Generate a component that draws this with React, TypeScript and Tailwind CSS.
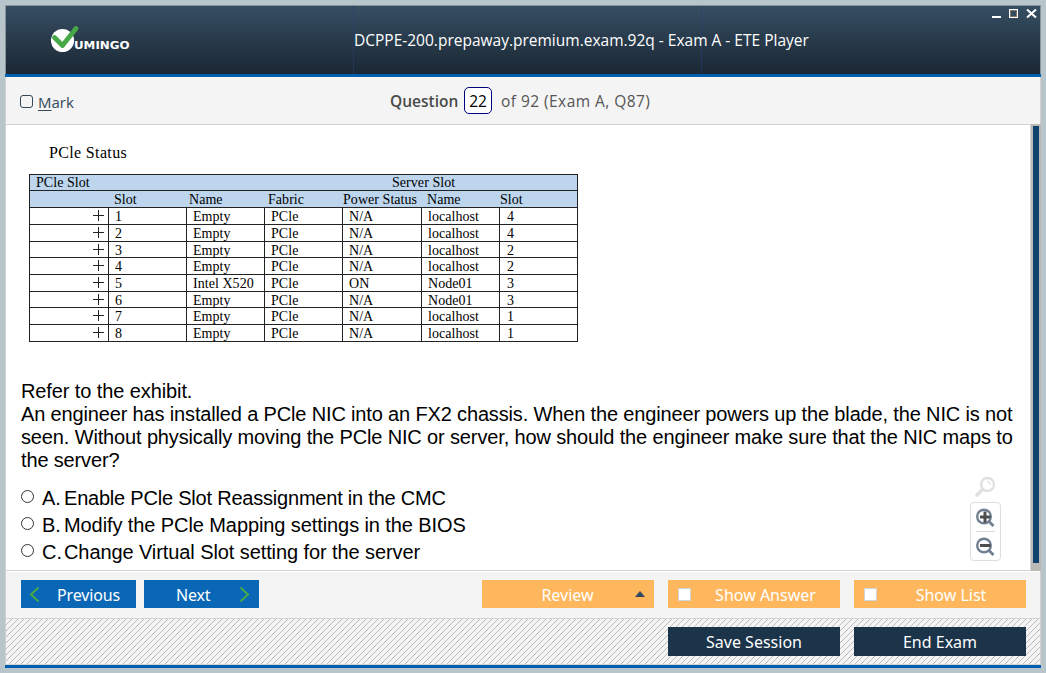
import React from "react";

const SEGOE = "font-['Open_Sans','Noto_Sans',sans-serif]";
const TAHOMA = "font-['Noto_Sans','Open_Sans',sans-serif]";

const slots = [
  { h: "h-[17px]", cells: ["1", "Empty", "PCle", "N/A", "localhost", "4"] },
  { h: "h-[17px]", cells: ["2", "Empty", "PCle", "N/A", "localhost", "4"] },
  { h: "h-[16px]", cells: ["3", "Empty", "PCle", "N/A", "localhost", "2"] },
  { h: "h-[17px]", cells: ["4", "Empty", "PCle", "N/A", "localhost", "2"] },
  { h: "h-[17px]", cells: ["5", "Intel X520", "PCle", "ON", "Node01", "3"] },
  { h: "h-[16px]", cells: ["6", "Empty", "PCle", "N/A", "Node01", "3"] },
  { h: "h-[17px]", cells: ["7", "Empty", "PCle", "N/A", "localhost", "1"] },
  { h: "h-[17px]", cells: ["8", "Empty", "PCle", "N/A", "localhost", "1"] },
];

const COLS = "grid grid-rows-[100%] grid-cols-[79px_78px_78px_78px_79px_78px_78px]";

function Logo() {
  return (
    <svg className="ml-[45px] block" width="84" height="30" viewBox="0 0 84 30">
      <circle cx="11.5" cy="16.5" r="11.6" fill="#fff" />
      <path d="M3.5 13.5 L11.5 21.5 L25 4.5" fill="none" stroke="#46a846" strokeWidth="4.8" strokeLinecap="round" strokeLinejoin="round" />
      <text x="23" y="25" fill="#fff" fontFamily="DejaVu Sans" fontWeight="bold" fontSize="9.6" textLength="55.5" lengthAdjust="spacingAndGlyphs">UMINGO</text>
    </svg>
  );
}

function Header() {
  return (
    <header className="flex h-[68px] bg-linear-to-b from-[#374f63] to-[#1a2734]">
      <div className="flex w-[347px] items-start pt-[18px]">
        <Logo />
      </div>
      <div className="flex w-[349px] items-center border-x border-dotted border-[#2c3a78] pt-[2px]">
        <h1 className={`${SEGOE} whitespace-nowrap text-[15.5px] font-normal text-white`}>
          DCPPE-200.prepaway.premium.exam.92q - Exam A - ETE Player
        </h1>
      </div>
      <div className="flex flex-1 justify-end pt-[2px] pr-px">
        <svg width="48" height="12" viewBox="0 0 48 12" shapeRendering="crispEdges">
          <rect x="1" y="8" width="9" height="2" fill="#fff" />
          <rect x="18.500" y="1.500" width="8" height="8" fill="none" stroke="#fff" />
          <rect x="19.500" y="2.500" width="6" height="6" fill="none" stroke="#80766c" />
          <path d="M36 1.500 L45 9.500 M45 1.500 L36 9.500" stroke="#fff" strokeWidth="2" shapeRendering="auto" />
        </svg>
      </div>
    </header>
  );
}

function QuestionBar() {
  return (
    <div className={`${SEGOE} flex h-[48px] items-center border-b border-[#d2d2d2] bg-[#f4f4f4] text-[15.5px]`}>
      <div className="flex w-[384px] items-center pl-[14px] pt-[3px] text-[15px] text-[#33495c]">
        <span className="mb-[2px] mr-[5px] h-[13px] w-[13px] rounded-[3px] border border-[#33495c]" />
        <span><span className="underline underline-offset-2">M</span>ark</span>
      </div>
      <span className="w-[69px] pt-[2px] font-semibold text-[#4a4a4a]">Question</span>
      <span className="ml-[5px] flex h-[27px] w-[28px] items-center justify-center rounded-[5px] border border-[#000080] bg-white pt-[2px] text-black">22</span>
      <span className="ml-[9px] pt-[2px] whitespace-nowrap tracking-[0.45px] text-[#555]">of 92 (Exam A, Q87)</span>
    </div>
  );
}

function Exhibit() {
  return (
    <div className="ml-[23px] pt-[18px] font-['Liberation_Serif',serif] text-black">
      <div className="h-[31px] pl-[20px] text-[16px] leading-[20px] tracking-[0.35px]">PCle Status</div>
      <div className="w-[549px] border border-b-0 border-[#222] text-[14px] leading-[18px] tracking-[0.05px]">
        <div className="flex h-[16px] border-b border-[#222] bg-[#bdd6ee] leading-[16px]">
          <span className="w-[356px] pl-[6px]">PCle Slot</span>
          <span className="pl-[6px]">Server Slot</span>
        </div>
        <div className={`${COLS} h-[17px] border-b border-[#222] bg-[#bdd6ee] whitespace-nowrap`}>
          <span />
          <span className="pl-[5px]">Slot</span>
          <span className="pl-[2px]">Name</span>
          <span className="pl-[3px]">Fabric</span>
          <span>Power Status</span>
          <span className="pl-[5px]">Name</span>
          <span>Slot</span>
        </div>
        {slots.map((row) => (
          <div key={row.cells[0]} className={`${COLS} ${row.h} border-b border-[#222] whitespace-nowrap`}>
            <span className="flex items-start justify-end border-r border-[#222] pt-[2px] pr-[4px]">
              <svg width="11" height="11" viewBox="0 0 11 11"><path d="M0 5.500H11M5.500 0V11" stroke="#222" /></svg>
            </span>
            {row.cells.map((c, i) => (
              <span key={i} className={i === 5 ? "h-full pl-[7px]" : "h-full border-r border-[#222] pl-[6px]"}>{c}</span>
            ))}
          </div>
        ))}
      </div>
    </div>
  );
}

const answers = [
  { letter: "A.", text: "Enable PCle Slot Reassignment in the CMC", spacing: "tracking-[-0.21px]" },
  { letter: "B.", text: "Modify the PCle Mapping settings in the BIOS", spacing: "tracking-[-0.09px]" },
  { letter: "C.", text: "Change Virtual Slot setting for the server", spacing: "tracking-[-0.09px]" },
];

function Magnifier({ sign }: { sign: "plus" | "minus" }) {
  return (
    <svg className="mr-px shrink-0" width="20" height="20" viewBox="0 0 20 20">
      <circle cx="9" cy="8.500" r="6.800" fill="none" stroke="#708090" strokeWidth="2.400" />
      <path d="M13.500 13 L18.500 18" stroke="#708090" strokeWidth="2.800" />
      <path d={sign === "plus" ? "M5 9H15.500M10 3.500V14.500" : "M5 8.500H15.500"} stroke="#4e4e4e" strokeWidth="3" />
    </svg>
  );
}

function Content() {
  return (
    <main className="flex h-[446px] bg-white">
      <div className="relative flex-1 border-b border-[#d2d2d2]">
        <Exhibit />
        <div className="mt-[38px] ml-[15px] font-['Liberation_Sans',Arial,sans-serif] text-[20px] leading-[23px] whitespace-nowrap text-black">
          <p className="tracking-[-0.1px]">Refer to the exhibit.</p>
          <p className="tracking-[-0.153px]">An engineer has installed a PCle NIC into an FX2 chassis. When the engineer powers up the blade, the NIC is not</p>
          <p className="tracking-[-0.14px]">seen. Without physically moving the PCle NIC or server, how should the engineer make sure that the NIC maps to</p>
          <p className="tracking-[-0.15px]">the server?</p>
          <ul className="mt-[13px] leading-[27px]">
            {answers.map((a) => (
              <li key={a.letter} className="flex">
                <span className="mt-[5px] mr-[8px] h-[13px] w-[13px] rounded-full border border-[#333]" />
                <span className="w-[22px]">{a.letter}</span>
                <span className={a.spacing}>{a.text}</span>
              </li>
            ))}
          </ul>
        </div>
        <div className="absolute right-[29px] bottom-[9px] flex w-[31px] flex-col items-center">
          <svg className="mr-[2px] mb-[4px]" width="22" height="22" viewBox="0 0 22 22">
            <circle cx="13.500" cy="8.500" r="6.500" fill="none" stroke="#e0e0e0" strokeWidth="2.400" />
            <path d="M8.500 13.500 L3 19" stroke="#e0e0e0" strokeWidth="3.600" strokeLinecap="round" />
            <path d="M13 5.500 Q16 5.500 16.500 8.500" fill="none" stroke="#e0e0e0" strokeWidth="1.200" />
          </svg>
          <div className="flex h-[59px] w-[31px] flex-col items-center rounded-[4px] border border-[#dedede] bg-white pt-[5px]">
            <Magnifier sign="plus" />
            <div className="mt-[3px] mb-[5px] h-px w-[19px] shrink-0 bg-[#d8d8d8]" />
            <Magnifier sign="minus" />
          </div>
        </div>
      </div>
      <div className="-mt-px h-[447px] w-[11px] border-l border-[#d2d2d2] bg-[#bab9b5] pt-[2px] pl-[2px]">
        <div className="h-[437px] w-[6px] bg-[#0c426c]" />
      </div>
    </main>
  );
}

function Chevron({ right }: { right?: boolean }) {
  return (
    <svg width="11" height="17" viewBox="0 0 11 17">
      <path d={right ? "M1.500 1.500 L9 8.500 L1.500 15.500" : "M9.500 1.500 L2 8.500 L9.500 15.500"} fill="none" stroke="#46a846" strokeWidth="2" />
    </svg>
  );
}

const ORANGE = "flex h-[28px] w-[172px] items-center bg-[#ffb75d] text-white";
const NAVY = "flex h-[29px] w-[172px] items-center justify-center bg-[#1b344a] text-white";

function CheckBox() {
  return <span className="ml-[10px] h-[13px] w-[13px] shrink-0 border border-[#d4d4d4] bg-white" />;
}

function Footer() {
  return (
    <footer className={`${TAHOMA} text-[16px] whitespace-nowrap`}>
      <div className="flex h-[48px] items-start border-t border-b border-t-white border-b-[#d2d2d2] bg-[#f4f4f4] pt-[8px] pl-[15px]">
        <button className="flex h-[28px] w-[115px] items-center bg-[#0a67b6] pl-[8px] text-white">
          <Chevron /><span className="ml-[17px] pt-px tracking-[-0.15px]">Previous</span>
        </button>
        <button className="ml-[8px] flex h-[28px] w-[115px] items-center bg-[#0a67b6] pl-[32px] text-white">
          <span className="w-[63px] pt-px text-left tracking-[-0.2px]">Next</span><Chevron right />
        </button>
        <button className={`${ORANGE} ml-[223px]`}>
          <span className="w-[153px] pt-px pl-[18px]">Review</span>
          <svg width="10" height="6" viewBox="0 0 10 6"><path d="M5 0L10 6H0Z" fill="#33495c" /></svg>
        </button>
        <button className={`${ORANGE} ml-[14px]`}><CheckBox /><span className="w-[149px] pt-px">Show Answer</span></button>
        <button className={`${ORANGE} ml-[14px]`}><CheckBox /><span className="w-[148px] pt-px">Show List</span></button>
      </div>
      <div className="relative flex h-[46px] items-start justify-end gap-[14px] border-b border-[#d2d2d2] bg-[#f4f4f4] pt-[8px] pr-[14px]">
        <svg className="absolute inset-0 h-full w-full" shapeRendering="crispEdges">
          <defs>
            <pattern id="hatch" width="6" height="6" patternUnits="userSpaceOnUse">
              <path d="M0 5h1v1h-1zM1 4h1v1h-1zM2 3h1v1h-1zM3 2h1v1h-1zM4 1h1v1h-1zM5 0h1v1h-1z" fill="#bcbcbc" />
            </pattern>
          </defs>
          <rect width="100%" height="100%" fill="url(#hatch)" />
        </svg>
        <button className={`${NAVY} relative`}>Save Session</button>
        <button className={`${NAVY} relative`}>End Exam</button>
      </div>
    </footer>
  );
}

export default function App() {
  return (
    <div className="h-[673px] w-[1046px] overflow-hidden bg-[#b8c5ca] pt-[5px] pl-[5px]">
      <div className="w-[1036px]">
        <div className="border border-b-0 border-[#87949a]"><Header /></div>
        <div className="h-[3px] bg-[#0060b0]" />
        <div className="border-x border-[#d0d0d0]">
          <QuestionBar />
          <div className="-mr-px"><Content /></div>
          <Footer />
        </div>
        <div className="h-[3px] bg-[#0060b0]" />
      </div>
    </div>
  );
}
